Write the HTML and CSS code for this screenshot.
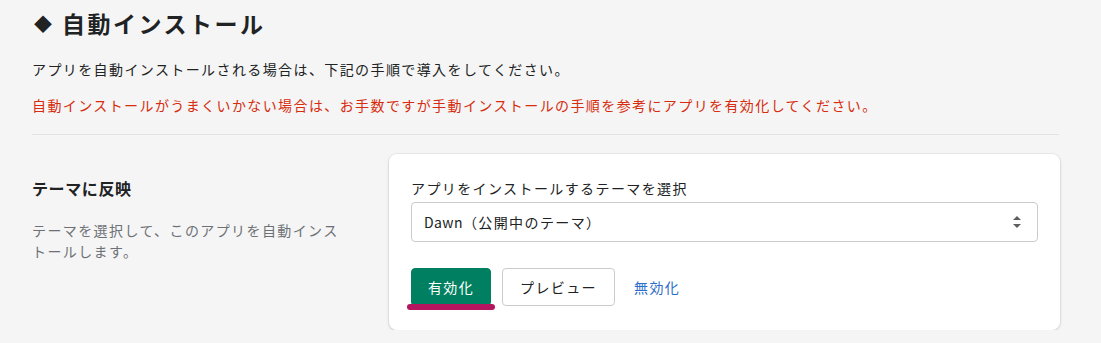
FILE: index.html
```html
<!DOCTYPE html>
<html lang="ja">
<head>
    <meta charset="UTF-8">
    <meta name="viewport" content="width=device-width, initial-scale=1.0">
    <title>自動インストール</title>
    <link rel="stylesheet" href="styles.css">
</head>
<body>
    <div class="page">
        <h2 class="title"><span class="title-mark">◆</span>自動インストール</h2>
        <p class="lead">アプリを自動インストールされる場合は、下記の手順で導入をしてください。</p>
        <p class="warn">自動インストールがうまくいかない場合は、お手数ですが手動インストールの手順を参考にアプリを有効化してください。</p>
        <hr class="divider">

        <div class="layout">
            <div class="layout-side">
                <h3 class="side-title">テーマに反映</h3>
                <p class="side-desc">テーマを選択して、このアプリを自動インストールします。</p>
            </div>

            <div class="card">
                <label class="field-label" for="theme-select">アプリをインストールするテーマを選択</label>
                <div class="select">
                    <span class="select-value"><span class="latin">Dawn</span>（公開中のテーマ）</span>
                    <svg class="select-arrows" width="10" height="14" viewBox="0 0 10 14">
                        <path d="M5 1 L9 5 H1 Z" fill="#5c5f62"/>
                        <path d="M5 13 L9 9 H1 Z" fill="#5c5f62"/>
                    </svg>
                </div>

                <div class="actions">
                    <button class="btn btn-primary">有効化</button>
                    <button class="btn">プレビュー</button>
                    <a class="link" href="#">無効化</a>
                </div>
            </div>
        </div>
    </div>
</body>
</html>
```

FILE: styles.css
```css
* {
    margin: 0;
    padding: 0;
    box-sizing: border-box;
}

body {
    background: #f5f5f5;
    color: #202223;
    font-family: "Noto Sans CJK JP", "Noto Sans", sans-serif;
    font-size: 14px;
    letter-spacing: 1.4px;
}

.page {
    padding: 8px 42px 0 32px;
}

.title {
    display: flex;
    align-items: center;
    font-size: 23px;
    line-height: 30px;
    font-weight: 700;
    letter-spacing: 2.5px;
}

.title-mark {
    font-size: 18px;
    margin: 0 10px 0 2px;
    letter-spacing: 0;
}

.lead {
    margin-top: 20px;
    line-height: 22px;
}

.warn {
    margin-top: 14px;
    line-height: 22px;
    color: #d72c0d;
}

.divider {
    margin-top: 18px;
    border: none;
    border-top: 1px solid #e1e3e5;
}

.layout {
    display: grid;
    grid-template-columns: 357px 1fr;
    margin-top: 19px;
}

.side-title {
    margin-top: 22px;
    font-size: 16px;
    line-height: 24px;
    font-weight: 700;
    letter-spacing: 0.6px;
}

.side-desc {
    margin-top: 20px;
    max-width: 318px;
    line-height: 21px;
    color: #6d7175;
}

.card {
    background: #fff;
    border-radius: 8px;
    box-shadow: 0 0 0 1px rgba(63, 63, 68, 0.05), 0 1px 3px rgba(63, 63, 68, 0.2);
    padding: 24px 22px 24px;
    margin-right: -1px;
}

.field-label {
    display: block;
    line-height: 20px;
}

.select {
    margin-top: 4px;
    height: 40px;
    display: flex;
    align-items: center;
    justify-content: space-between;
    padding: 0 15px 0 12px;
    border: 1px solid #c9cccf;
    border-radius: 4px;
}

.latin {
    letter-spacing: 0.4px;
}

.select-arrows {
    display: block;
}

.actions {
    display: flex;
    align-items: center;
    gap: 11px;
    margin-top: 26px;
}

.btn {
    height: 38px;
    padding: 0 17px;
    background: #fff;
    color: #202223;
    border: 1px solid #c9cccf;
    border-radius: 4px;
    font: inherit;
    letter-spacing: inherit;
    cursor: pointer;
}

.btn-primary {
    position: relative;
    width: 80px;
    padding: 0;
    background: #008060;
    border-color: #008060;
    color: #fff;
}

.btn-primary::after {
    content: '';
    position: absolute;
    left: -5px;
    right: -5px;
    bottom: -5px;
    height: 6px;
    background: #b5155f;
    border-radius: 3px;
}

.link {
    margin-left: 8px;
    color: #2c6ecb;
    text-decoration: none;
}
```
